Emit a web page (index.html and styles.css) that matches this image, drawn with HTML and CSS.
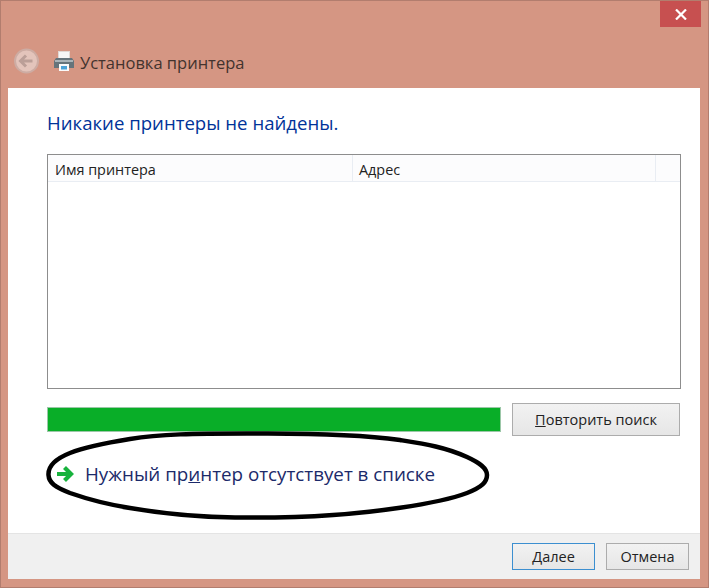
FILE: index.html
```html
<!DOCTYPE html>
<html lang="ru">
<head>
<meta charset="utf-8">
<title>Установка принтера</title>
<link rel="stylesheet" href="styles.css">
</head>
<body>
<div class="window">
  <div class="chrome">
    <div class="close-row">
      <div class="close">
        <svg width="12" height="11" viewBox="0 0 12 11"><path d="M1 .5 11 10.5M11 .5 1 10.5" stroke="#fff" stroke-width="2.2" fill="none"/></svg>
      </div>
    </div>
    <div class="title-row">
      <div class="back">
        <svg width="26" height="26" viewBox="0 0 26 26"><circle cx="12.500" cy="13" r="11.500" fill="#e3c4bb" stroke="#cdaca3" stroke-width="2"/><path d="M6.500 13h12M12 7.500 6.500 13l5.500 5.500" fill="none" stroke="#bb9f98" stroke-width="3"/></svg>
      </div>
      <svg class="printer" width="20" height="20" viewBox="0 0 20 20">
        <rect x="4.500" y="0.500" width="11" height="8" fill="#f6f6f6" stroke="#e0d8d4"/>
        <path d="M2 7h16l2 3v7H0v-7z" fill="#66747b"/>
        <rect x="1" y="9" width="18" height="2" fill="#aab4b9"/>
        <rect x="5" y="13" width="10" height="7" fill="#fafafa"/>
        <rect x="7" y="15" width="6" height="3.500" fill="#4da3d8"/>
      </svg>
      <div class="title">Установка принтера</div>
    </div>
  </div>
  <div class="client">
    <div class="content">
      <h1 class="heading">Никакие принтеры не найдены.</h1>
      <div class="table">
        <div class="thead">
          <div class="th th-name">Имя принтера</div>
          <div class="th th-addr">Адрес</div>
          <div class="th th-end"></div>
        </div>
      </div>
      <div class="search-row">
        <div class="progress"></div>
        <button class="btn btn-search"><u>П</u>овторить поиск</button>
      </div>
      <div class="link-row">
        <svg class="arrow" width="18" height="16" viewBox="0 0 18 16"><path d="M1 8h13.500M8.500 1.500 15 8l-6.500 6.500" fill="none" stroke="#17b23c" stroke-width="4.200"/></svg>
        <span class="link">Нужный пр<u>и</u>нтер отсутствует в списке</span>
      </div>
      <svg class="ellipse" width="447" height="91" viewBox="0 0 447 91"><path d="M202 3.500C150 3.500 115 4 85 9 60 13 40 17 25 23 10 29 3 37 3.500 45 4 53 10 57 25 63 45 70 60 74 85 78 120 84 150 87 190 87.500 230 88 260 87 288 85 320 83 390 75 422 63 437 57 442 52 442 45 442 38 435 33 422 27 400 17 380 14 355 10 320 5 260 3 202 3.500Z" fill="none" stroke="#000" stroke-width="4.500"/></svg>
    </div>
    <div class="footer">
      <button class="btn btn-foot btn-default"><u>Д</u>алее</button>
      <button class="btn btn-foot">Отмена</button>
    </div>
  </div>
</div>
</body>
</html>
```
FILE: styles.css
```css
* { box-sizing: border-box; }
html, body { margin: 0; padding: 0; }
body { width: 709px; height: 588px; overflow: hidden; font-family: "Open Sans", "Noto Sans", sans-serif; }
.window {
  width: 709px; height: 588px;
  background: #d59683;
  border: 1px solid #b27d6e;
  padding: 0 8px 8px 7px;
  display: flex; flex-direction: column;
}
.chrome { height: 87px; display: flex; flex-direction: column; }
.close-row { display: flex; justify-content: flex-end; margin-right: -1px; height: 26px; }
.close {
  width: 41px; height: 26px; background: #c75050;
  display: flex; align-items: center; justify-content: center;
}
.title-row { display: flex; align-items: center; height: 34px; margin-top: 17px; }
.back { width: 26px; height: 26px; margin-left: 6px; }
.printer { margin-left: 14px; }
.title { margin-left: 6px; padding-top: 2px; font-size: 16.500px; color: #43332e; white-space: nowrap; }
.client {
  flex: 1; background: #fff; display: flex; flex-direction: column;
}
.content { flex: 1; position: relative; padding: 20px 20px 0 39px; }
.heading { margin: 0; font-size: 18.600px; font-weight: 400; color: #003399; line-height: 30px; height: 46px; white-space: nowrap; }
.table { height: 235px; width: 634px; border: 1px solid #8d8d8d; background: #fff; }
.thead { display: flex; height: 27px; background: #fcfcfd; border-bottom: 1px solid #e9edf3; font-size: 14.400px; color: #222; }
.th { height: 100%; display: flex; align-items: center; padding: 2px 0 0 7px; white-space: nowrap; }
.th-name { width: 305px; border-right: 1px solid #e9edf3; }
.th-addr { width: 303px; border-right: 1px solid #e9edf3; padding-left: 6px; }
.th-end { flex: 1; }
.search-row { display: flex; align-items: center; margin-top: 14px; height: 33px; width: 633px; justify-content: space-between; }
.progress { width: 454px; height: 25px; background: #09ae28; border: 1px solid #9cc7a8; }
.btn {
  font-family: inherit; font-size: 14.500px; color: #222; padding: 0;
  background: linear-gradient(#f2f2f2, #e6e6e6);
  border: 1px solid #acacac;
}
.btn-search { width: 168px; height: 33px; }
.link-row { display: flex; align-items: center; height: 30px; margin-top: 23px; margin-left: 9px; }
.arrow { flex: none; }
.link { margin-left: 11px; font-size: 18.800px; color: #1c2a6a; white-space: nowrap; }
.ellipse { position: absolute; left: 37px; top: 342px; }
.footer {
  height: 46px; background: #f0f0f0; border-top: 1px solid #e4e4e4;
  display: flex; justify-content: flex-end; align-items: flex-start;
  gap: 11px; padding: 9px 11px 0 0;
}
.btn-foot { width: 83px; height: 27px; }
.btn-default { border-color: #3c8fd0; }
```
